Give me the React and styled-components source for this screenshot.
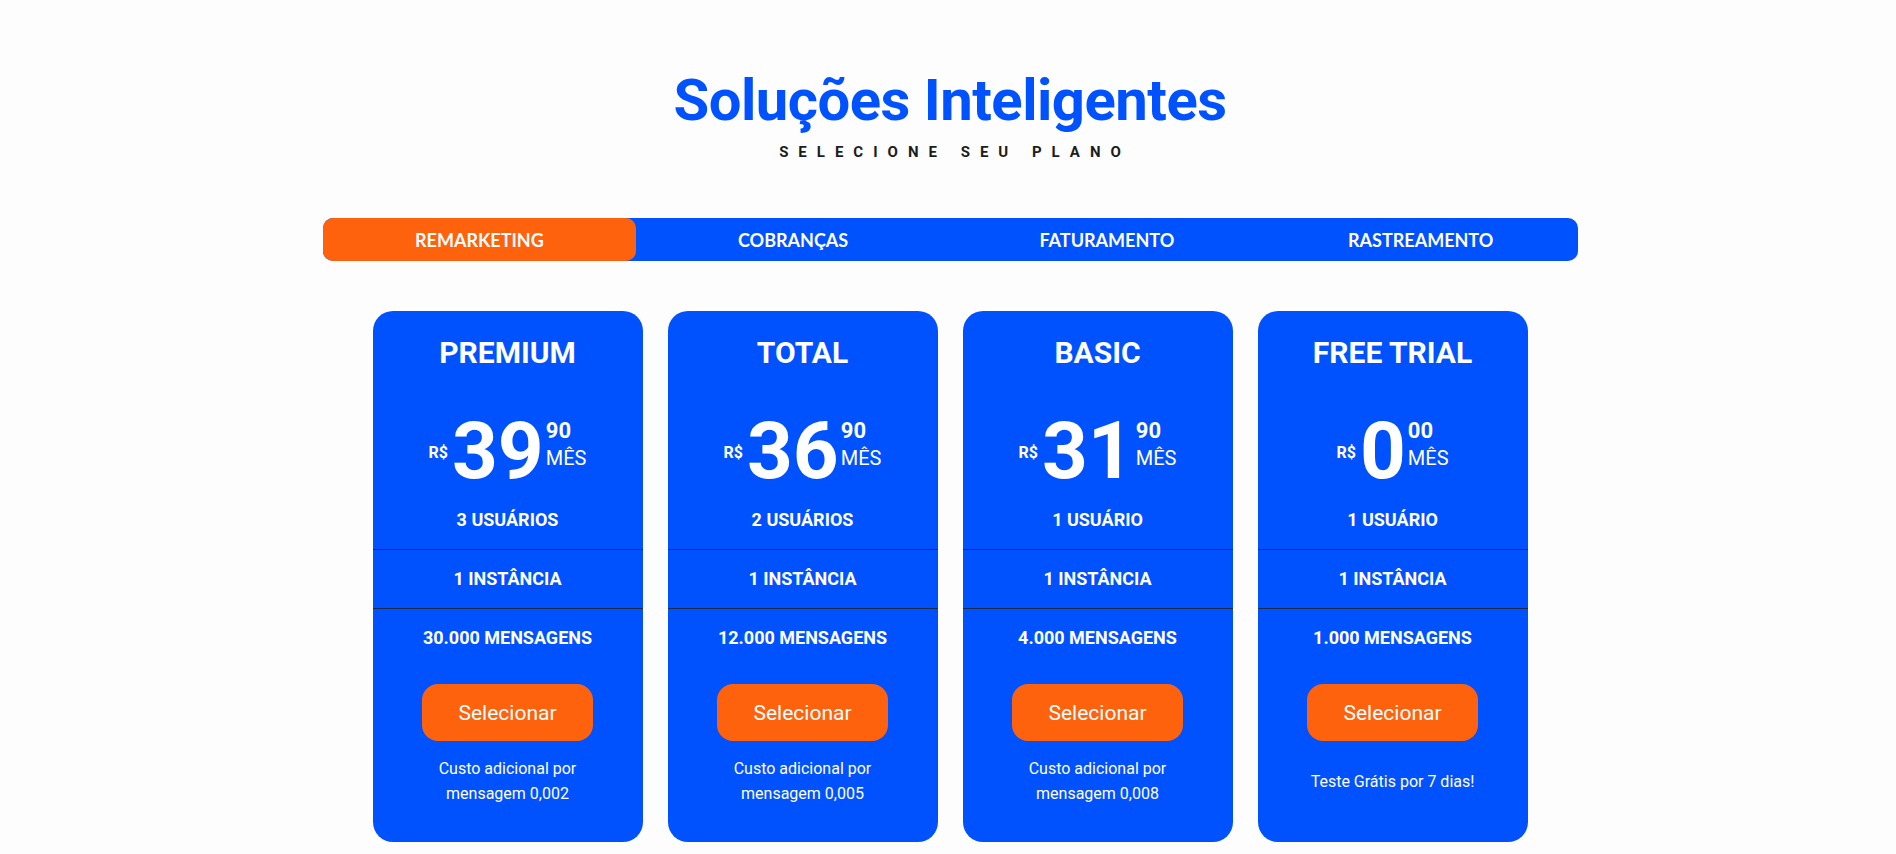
import React from 'react';
import styled, { createGlobalStyle, css } from 'styled-components';

const BLUE = '#0052ff';
const ORANGE = '#ff620c';

const GlobalStyle = createGlobalStyle`
  html, body {
    margin: 0;
    padding: 0;
    background: #fdfdfd;
  }

  body {
    font-family: Roboto, 'Noto Sans', sans-serif;
    -webkit-font-smoothing: antialiased;
  }

  * {
    box-sizing: border-box;
  }
`;

const Page = styled.main`
  display: flex;
  flex-direction: column;
  align-items: center;
  padding: 71px 0 0 4px;
`;

const Heading = styled.h1`
  margin: 0;
  color: ${BLUE};
  font-size: 58px;
  font-weight: 700;
  letter-spacing: -0.5px;
  line-height: 1;
`;

const Subheading = styled.p`
  margin: 16px 0 0;
  color: #1c1c1c;
  font-size: 15px;
  font-weight: 700;
  letter-spacing: 10px;
  line-height: 1;
  padding-left: 10px;
`;

const Tabs = styled.nav`
  display: grid;
  grid-template-columns: repeat(4, 1fr);
  width: 1255px;
  height: 43px;
  margin-top: 58px;
  background-color: ${BLUE};
  border-radius: 10px;
`;

const Tab = styled.button`
  ${({ active }) => css`
    border: none;
    border-radius: 10px;
    background-color: ${active ? ORANGE : 'transparent'};
    color: white;
    cursor: pointer;
    font-family: Lato, Roboto, sans-serif;
    font-size: 18px;
    font-weight: 700;
    text-transform: uppercase;
  `}
`;

const Plans = styled.section`
  display: flex;
  align-items: flex-start;
  gap: 25px;
  margin-top: 50px;
`;

const Card = styled.article`
  display: flex;
  flex-direction: column;
  align-items: center;
  width: 270px;
  padding: 24px 0 36px;
  background-color: ${BLUE};
  border-radius: 20px;
  color: white;
`;

const PlanName = styled.h2`
  margin: 0;
  font-size: 30px;
  font-weight: 700;
  line-height: 36px;
`;

const Price = styled.div`
  display: flex;
  align-items: flex-start;
  justify-content: center;
  margin-top: 40px;
`;

const Currency = styled.span`
  margin: 34px 4px 0 0;
  font-size: 16px;
  font-weight: 700;
  line-height: 1;
`;

const Amount = styled.span`
  font-size: 80px;
  font-weight: 700;
  line-height: 1;
`;

const Side = styled.div`
  display: flex;
  flex-direction: column;
  gap: 6px;
  margin: 9px 0 0 2px;
`;

const Cents = styled.span`
  font-size: 22px;
  font-weight: 700;
  line-height: 1;
`;

const Period = styled.span`
  font-size: 20px;
  font-weight: 400;
  line-height: 1;
`;

const Features = styled.ul`
  width: 100%;
  margin: 0;
  padding: 0;
  list-style: none;
`;

const Feature = styled.li`
  height: 58px;
  font-size: 18px;
  font-weight: 700;
  line-height: 58px;
  text-align: center;
  text-transform: uppercase;

  & + & {
    height: 59px;
    border-top: 1px solid #1d2a4a;
  }
`;

const SelectButton = styled.button`
  width: 171px;
  height: 57px;
  margin-top: 17px;
  border: none;
  border-radius: 16px;
  background-color: ${ORANGE};
  color: white;
  cursor: pointer;
  font-family: Roboto, sans-serif;
  font-size: 21px;
  font-weight: 400;
`;

const Note = styled.p`
  display: flex;
  align-items: center;
  justify-content: center;
  min-height: 50px;
  margin: 15px 0 0;
  padding: 0 20px;
  font-size: 16px;
  line-height: 25px;
  text-align: center;
`;

const tabs = ['Remarketing', 'Cobranças', 'Faturamento', 'Rastreamento'];

const plans = [
  {
    name: 'Premium', value: '39', cents: '90',
    features: ['3 usuários', '1 instância', '30.000 mensagens'],
    note: ['Custo adicional por', 'mensagem 0,002'],
  },
  {
    name: 'Total', value: '36', cents: '90',
    features: ['2 usuários', '1 instância', '12.000 mensagens'],
    note: ['Custo adicional por', 'mensagem 0,005'],
  },
  {
    name: 'Basic', value: '31', cents: '90',
    features: ['1 usuário', '1 instância', '4.000 mensagens'],
    note: ['Custo adicional por', 'mensagem 0,008'],
  },
  {
    name: 'Free Trial', value: '0', cents: '00',
    features: ['1 usuário', '1 instância', '1.000 mensagens'],
    note: ['Teste Grátis por 7 dias!'],
  },
];

const PlanCard = ({ plan }) => (
  <Card>
    <PlanName>{plan.name.toUpperCase()}</PlanName>
    <Price>
      <Currency>R$</Currency>
      <Amount>{plan.value}</Amount>
      <Side>
        <Cents>{plan.cents}</Cents>
        <Period>MÊS</Period>
      </Side>
    </Price>
    <Features>
      {plan.features.map((f) => <Feature key={f}>{f}</Feature>)}
    </Features>
    <SelectButton>Selecionar</SelectButton>
    <Note>
      <span>
        {plan.note.map((line, i) => (
          <React.Fragment key={line}>
            {i > 0 && <br />}
            {line}
          </React.Fragment>
        ))}
      </span>
    </Note>
  </Card>
);

const App = () => (
  <>
    <GlobalStyle />
    <Page>
      <Heading>Soluções Inteligentes</Heading>
      <Subheading>SELECIONE SEU PLANO</Subheading>
      <Tabs>
        {tabs.map((t, i) => <Tab key={t} active={i === 0}>{t}</Tab>)}
      </Tabs>
      <Plans>
        {plans.map((p) => <PlanCard key={p.name} plan={p} />)}
      </Plans>
    </Page>
  </>
);

export default App;
